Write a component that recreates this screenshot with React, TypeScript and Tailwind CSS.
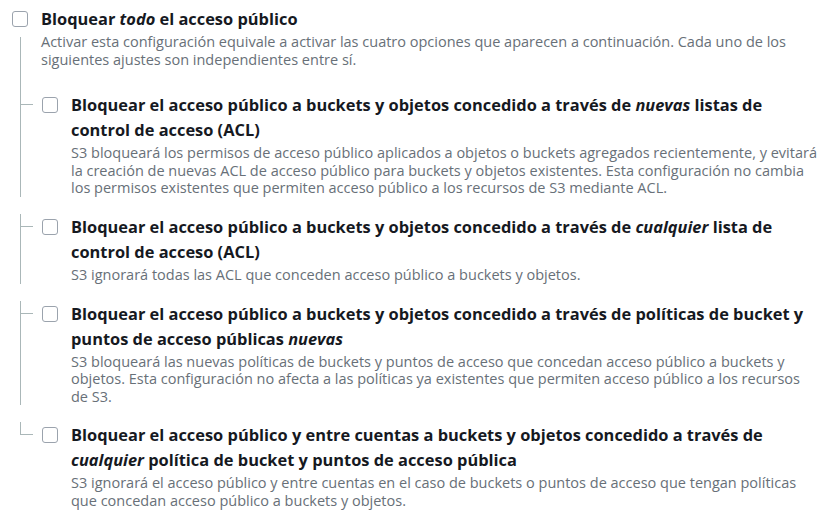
import React from "react";

const LINE = "border-[#aab7b8]";

function Box() {
  return (
    <div className="mt-[5px] h-4 w-4 shrink-0 rounded-[3px] border border-[#9ba3ad] bg-white" />
  );
}

function Text({ title, desc }: { title: React.ReactNode; desc: React.ReactNode }) {
  return (
    <div className="min-w-0 flex-1">
      <div className="text-[16.4px] font-bold leading-[25px] text-[#16191f]">{title}</div>
      <div className="mt-[2px] text-[14.5px] leading-[17.6px] text-[#687078]">{desc}</div>
    </div>
  );
}

function SubRow({
  title,
  desc,
  last,
}: {
  title: React.ReactNode;
  desc: React.ReactNode;
  last?: boolean;
}) {
  return (
    <div className={`flex ${last ? "" : "pb-[17px]"}`}>
      {last ? (
        <div className="w-[22px] shrink-0">
          <div className={`h-[13px] w-[13px] border-b border-l ${LINE}`} />
        </div>
      ) : (
        <div className={`w-[22px] shrink-0 border-l ${LINE}`}>
          <div className="mt-[12px] h-px w-[12px] bg-[#aab7b8]" />
        </div>
      )}
      <div className="flex flex-1 gap-[13px]">
        <Box />
        <Text title={title} desc={desc} />
      </div>
    </div>
  );
}

export default function App() {
  return (
    <div className="min-h-[519px] w-[829px] bg-white pl-3 pr-[10px] pt-[6px] font-['Open_Sans',sans-serif]">
      <div className="flex gap-[13px]">
        <Box />
        <Text
          title={
            <>
              Bloquear <i>todo</i> el acceso público
            </>
          }
          desc="Activar esta configuración equivale a activar las cuatro opciones que aparecen a continuación. Cada uno de los siguientes ajustes son independientes entre sí."
        />
      </div>
      <div className="ml-2">
        <div className={`-mt-[31px] h-[55px] border-l ${LINE}`} />
        <SubRow
          title={
            <>
              Bloquear el acceso público a buckets y objetos concedido a través de{" "}
              <i>nuevas</i> listas de control de acceso (ACL)
            </>
          }
          desc="S3 bloqueará los permisos de acceso público aplicados a objetos o buckets agregados recientemente, y evitará la creación de nuevas ACL de acceso público para buckets y objetos existentes. Esta configuración no cambia los permisos existentes que permiten acceso público a los recursos de S3 mediante ACL."
        />
        <SubRow
          title={
            <>
              Bloquear el acceso público a buckets y objetos concedido a través de{" "}
              <i>cualquier</i> lista de control de acceso (ACL)
            </>
          }
          desc="S3 ignorará todas las ACL que conceden acceso público a buckets y objetos."
        />
        <SubRow
          title={
            <>
              Bloquear el acceso público a buckets y objetos concedido a través de políticas
              de bucket y puntos de acceso públicas <i>nuevas</i>
            </>
          }
          desc="S3 bloqueará las nuevas políticas de buckets y puntos de acceso que concedan acceso público a buckets y objetos. Esta configuración no afecta a las políticas ya existentes que permiten acceso público a los recursos de S3."
        />
        <SubRow
          last
          title={
            <>
              Bloquear el acceso público y entre cuentas a buckets y objetos concedido a
              través de <i>cualquier</i> política de bucket y puntos de acceso pública
            </>
          }
          desc="S3 ignorará el acceso público y entre cuentas en el caso de buckets o puntos de acceso que tengan políticas que concedan acceso público a buckets y objetos."
        />
      </div>
    </div>
  );
}
